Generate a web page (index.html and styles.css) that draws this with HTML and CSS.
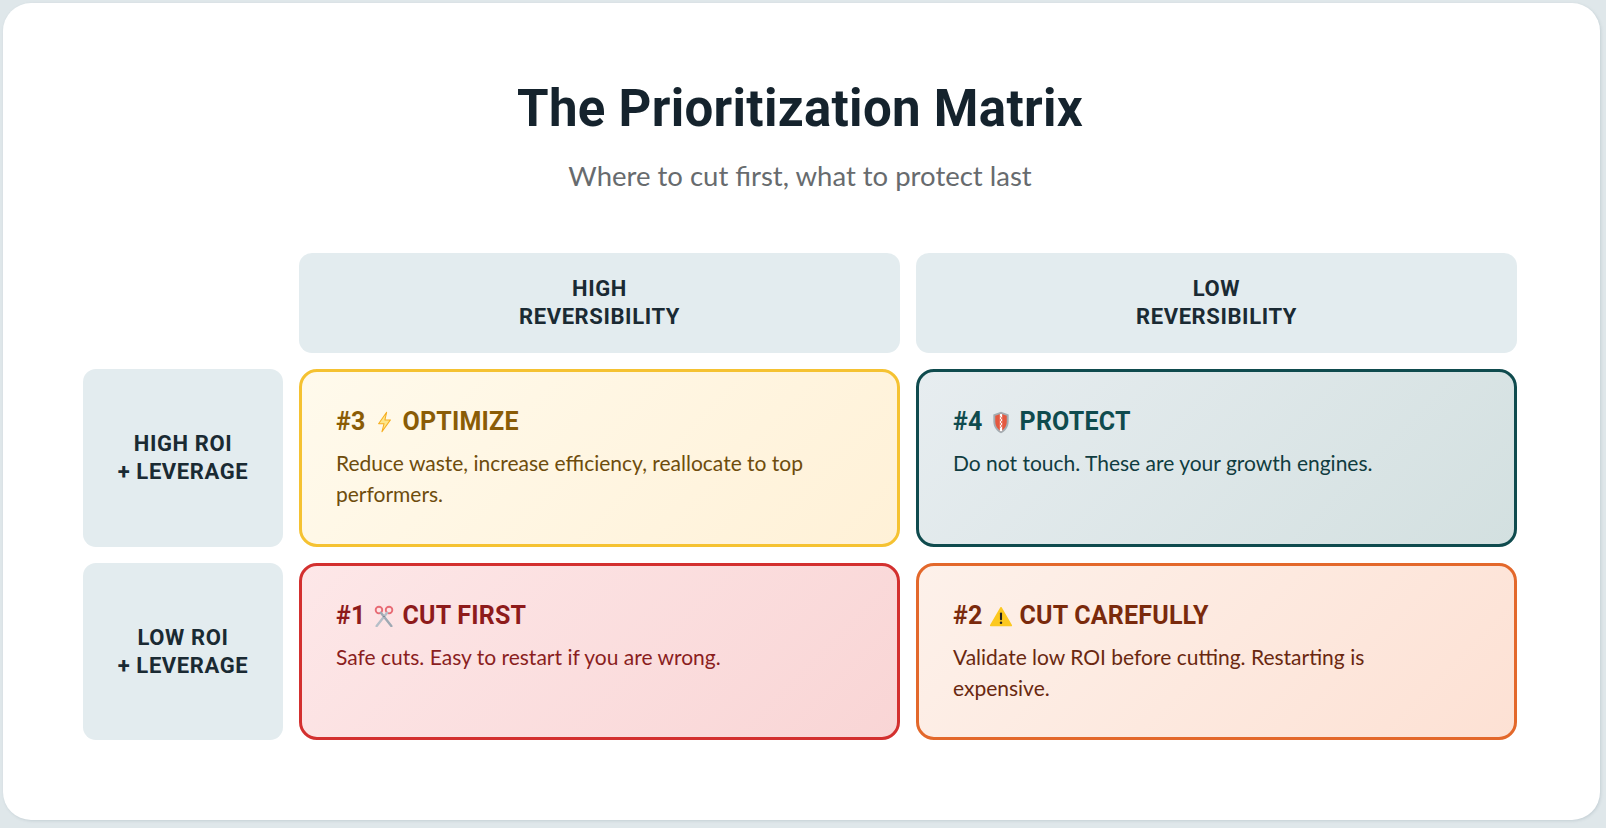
FILE: index.html
```html
<!DOCTYPE html>
<html lang="en">
<head>
<meta charset="utf-8">
<title>The Prioritization Matrix</title>
<link rel="stylesheet" href="styles.css">
</head>
<body>
<main class="card">
  <h1 class="title">The Prioritization Matrix</h1>
  <p class="subtitle">Where to cut first, what to protect last</p>
  <section class="matrix">
    <div class="corner"></div>
    <div class="label col-label">HIGH<br>REVERSIBILITY</div>
    <div class="label col-label">LOW<br>REVERSIBILITY</div>

    <div class="label row-label">HIGH ROI<br>+ LEVERAGE</div>
    <div class="cell optimize">
      <h2 class="cell-title"><span>#3</span>
        <span class="emoji"><svg class="bolt" viewBox="0 0 20 26" aria-hidden="true"><path d="M12.5 1.5 L3 15 H9.5 L7 24.5 L17 10.5 H10.5 Z" fill="#fde68a" stroke="#f6ad1e" stroke-width="1.2" stroke-linejoin="round"/></svg></span>
        <span>OPTIMIZE</span></h2>
      <p class="cell-text">Reduce waste, increase efficiency, reallocate to top performers.</p>
    </div>
    <div class="cell protect">
      <h2 class="cell-title"><span>#4</span>
        <span class="emoji"><svg class="shield" viewBox="0 0 18 24" aria-hidden="true"><path d="M9 0.8 L17 3.6 V11 C17 17 13.3 21.2 9 23.3 C4.7 21.2 1 17 1 11 V3.6 Z" fill="#a4acb1"/><path d="M9 2.9 L15 5 V11 C15 15.8 12.2 19.3 9 21.1 C5.8 19.3 3 15.8 3 11 V5 Z" fill="#e4583f"/><path d="M9 3.2 V21" stroke="#fff" stroke-width="2.4"/><polyline points="8,5.5 10,7.5 8,9.5 10,11.5 8,13.5 10,15.5 8,17.5" fill="none" stroke="#e4583f" stroke-width="0.9"/></svg></span>
        <span>PROTECT</span></h2>
      <p class="cell-text">Do not touch. These are your growth engines.</p>
    </div>

    <div class="label row-label">LOW ROI<br>+ LEVERAGE</div>
    <div class="cell cut">
      <h2 class="cell-title"><span>#1</span>
        <span class="emoji"><svg class="scissors" viewBox="0 0 24 24" aria-hidden="true"><circle cx="6.5" cy="5.5" r="3.6" fill="none" stroke="#e86b74" stroke-width="2"/><circle cx="17.5" cy="5.5" r="3.6" fill="none" stroke="#e86b74" stroke-width="2"/><path d="M8.6 8.4 L20 23" stroke="#9ea9b3" stroke-width="2.6" stroke-linecap="round"/><path d="M15.4 8.4 L4 23" stroke="#b5bfc8" stroke-width="2.6" stroke-linecap="round"/><circle cx="12" cy="12.6" r="0.9" fill="#6b7680"/></svg></span>
        <span>CUT FIRST</span></h2>
      <p class="cell-text">Safe cuts. Easy to restart if you are wrong.</p>
    </div>
    <div class="cell careful">
      <h2 class="cell-title"><span>#2</span>
        <span class="emoji"><svg class="warn" viewBox="0 0 24 22" aria-hidden="true"><path d="M12 1.8 L22.8 20.4 H1.2 Z" fill="#fcc81f" stroke="#fcc81f" stroke-width="1.6" stroke-linejoin="round"/><rect x="10.9" y="6.8" width="2.2" height="8.2" rx="1" fill="#222"/><circle cx="12" cy="17.6" r="1.3" fill="#222"/></svg></span>
        <span>CUT CAREFULLY</span></h2>
      <p class="cell-text">Validate low ROI before cutting. Restarting is expensive.</p>
    </div>
  </section>
</main>
</body>
</html>
```

FILE: styles.css
```css
html, body {
  margin: 0;
  padding: 0;
}

body {
  background: #dfe7ea;
  padding: 3px 6px 8px 3px;
  height: 828px;
  box-sizing: border-box;
}

.card {
  background: #ffffff;
  height: 100%;
  border-radius: 28px;
  box-sizing: border-box;
  padding: 76px 83px 0 80px;
  display: flex;
  flex-direction: column;
  align-items: center;
  box-shadow: 1px 1px 3px rgba(120, 140, 150, 0.25);
}

.title {
  font-family: Roboto, "Liberation Sans", sans-serif;
  font-weight: 700;
  font-size: 51px;
  line-height: 60px;
  letter-spacing: 0.3px;
  color: #15232d;
  margin: 0;
}

.subtitle {
  font-family: Lato, "Liberation Sans", sans-serif;
  font-size: 27.5px;
  line-height: 34px;
  color: #676b6e;
  margin: 20px 0 0;
}

.matrix {
  margin-top: 60px;
  width: 100%;
  display: grid;
  grid-template-columns: 200px 1fr 1fr;
  grid-template-rows: 100px 178px 177px;
  gap: 16px;
}

.label {
  background: #e3ecef;
  border-radius: 13px;
  display: flex;
  align-items: center;
  justify-content: center;
  text-align: center;
  font-family: Roboto, "Liberation Sans", sans-serif;
  font-weight: 700;
  font-size: 22px;
  line-height: 28px;
  letter-spacing: 0.6px;
  color: #1a2a33;
}

.cell {
  border: 3px solid;
  border-radius: 18px;
  padding: 35px 56px 20px 34px;
  box-sizing: border-box;
}

.cell-title {
  margin: 0;
  display: flex;
  align-items: center;
  gap: 6px;
  font-family: Roboto, "Liberation Sans", sans-serif;
  font-weight: 700;
  font-size: 25px;
  line-height: 30px;
  letter-spacing: 0.2px;
}

.emoji {
  width: 25px;
  height: 26px;
  display: flex;
  align-items: center;
  justify-content: center;
  flex: none;
}

.emoji svg {
  display: block;
}

.cell-text {
  margin: 10px 0 0;
  font-family: Lato, "Liberation Sans", sans-serif;
  font-size: 21px;
  line-height: 31px;
}

.bolt { width: 17px; height: 22px; }
.shield { width: 18px; height: 23px; }
.scissors { width: 22px; height: 22px; }
.warn { width: 24px; height: 21px; }

.optimize {
  border-color: #f5c232;
  background: linear-gradient(135deg, #fffaec 0%, #fff1d7 100%);
}
.optimize .cell-title { color: #8a5c06; }
.optimize .cell-text { color: #6e4c0c; }

.protect {
  border-color: #0f4b4e;
  background: linear-gradient(135deg, #e7edf0 0%, #d3e0e0 100%);
}
.protect .cell-title { color: #0f4b4e; }
.protect .cell-text { color: #103c40; }

.cut {
  border-color: #d3302f;
  background: linear-gradient(135deg, #fde7e8 0%, #f9d5d5 100%);
}
.cut .cell-title { color: #8e1b1b; }
.cut .cell-text { color: #8a1e1e; }

.careful {
  border-color: #e3682b;
  background: linear-gradient(135deg, #fdf1ea 0%, #fde1d4 100%);
}
.careful .cell-title { color: #7a2a0c; }
.careful .cell-text { color: #6a2810; }
```
